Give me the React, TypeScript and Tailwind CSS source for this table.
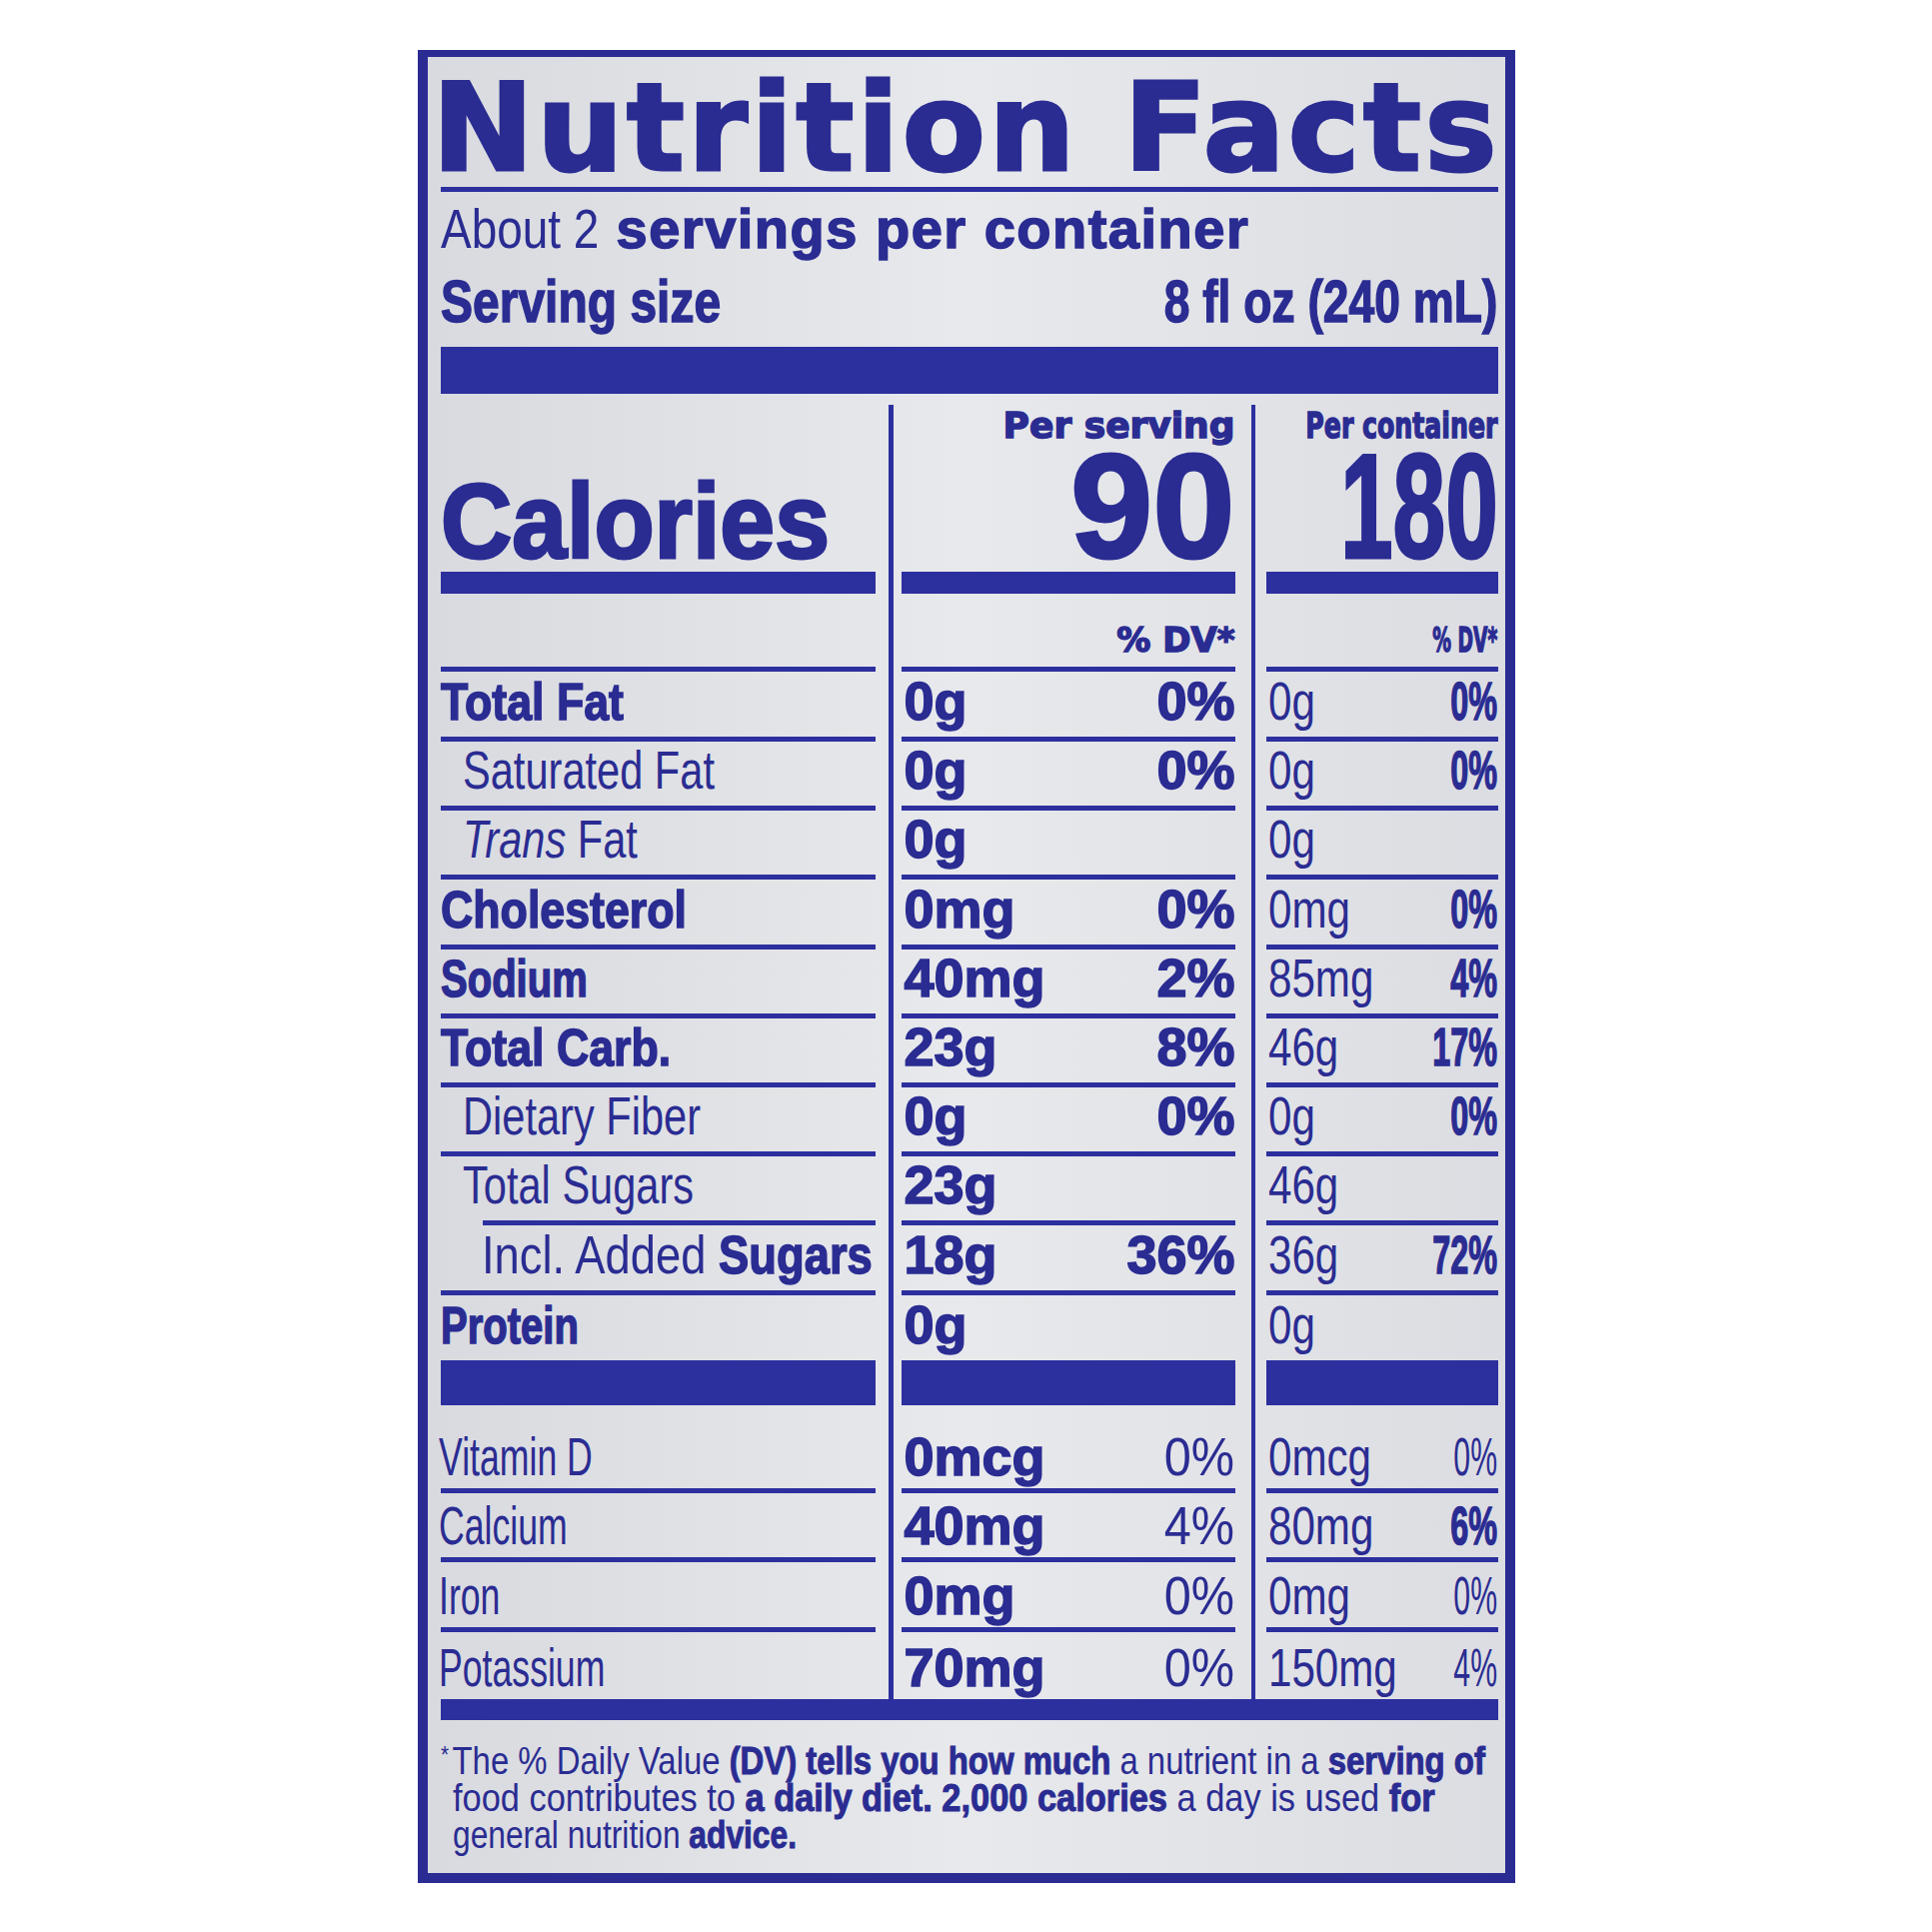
import type { ReactNode } from 'react';

type Row = {
  label: ReactNode;
  h: string;
  v1: string;
  p1?: string;
  v2: string;
  p2?: string;
  p2Bold?: boolean;
  shortLine?: boolean;
};

function Bold({ children, narrow }: { children: ReactNode; narrow?: boolean }) {
  return (
    <span
      className={
        narrow
          ? 'origin-left scale-x-[0.77] whitespace-nowrap font-bold text-[52px] leading-none [-webkit-text-stroke:1.5px_#2a2c92]'
          : 'origin-left scale-x-[0.86] whitespace-nowrap font-bold text-[52px] leading-none [-webkit-text-stroke:1.5px_#2a2c92]'
      }
    >
      {children}
    </span>
  );
}

function Sub({ children, deep }: { children: ReactNode; deep?: boolean }) {
  return deep ? (
    <span className="ml-[41px] origin-left scale-x-[0.84] whitespace-nowrap text-[54px] leading-none">{children}</span>
  ) : (
    <span className="ml-[22px] origin-left scale-x-[0.77] whitespace-nowrap text-[54px] leading-none">{children}</span>
  );
}

const nutrients: Row[] = [
  { label: <Bold>Total Fat</Bold>, h: 'h-[65px]', v1: '0g', p1: '0%', v2: '0g', p2: '0%' },
  { label: <Sub>Saturated Fat</Sub>, h: 'h-[64px]', v1: '0g', p1: '0%', v2: '0g', p2: '0%' },
  { label: <Sub><span className="italic">Trans</span> Fat</Sub>, h: 'h-[64px]', v1: '0g', v2: '0g' },
  { label: <Bold>Cholesterol</Bold>, h: 'h-[65px]', v1: '0mg', p1: '0%', v2: '0mg', p2: '0%' },
  { label: <Bold narrow>Sodium</Bold>, h: 'h-[64px]', v1: '40mg', p1: '2%', v2: '85mg', p2: '4%' },
  { label: <Bold>Total Carb.</Bold>, h: 'h-[64px]', v1: '23g', p1: '8%', v2: '46g', p2: '17%' },
  { label: <Sub>Dietary Fiber</Sub>, h: 'h-[64px]', v1: '0g', p1: '0%', v2: '0g', p2: '0%' },
  { label: <Sub>Total Sugars</Sub>, h: 'h-[64px]', v1: '23g', v2: '46g', shortLine: true },
  {
    label: <Sub deep>Incl. Added <span className="font-bold [-webkit-text-stroke:1.5px_#2a2c92]">Sugars</span></Sub>,
    h: 'h-[65px]',
    v1: '18g',
    p1: '36%',
    v2: '36g',
    p2: '72%',
  },
];

const vitamins: Row[] = [
  { label: 'Vitamin D', h: 'h-[83px]', v1: '0mcg', p1: '0%', v2: '0mcg', p2: '0%' },
  { label: 'Calcium', h: 'h-[64px]', v1: '40mg', p1: '4%', v2: '80mg', p2: '6%', p2Bold: true },
  { label: 'Iron', h: 'h-[65px]', v1: '0mg', p1: '0%', v2: '0mg', p2: '0%' },
  { label: 'Potassium', h: 'h-[67px]', v1: '70mg', p1: '0%', v2: '150mg', p2: '4%' },
];

function Rule({ className = '' }: { className?: string }) {
  return <div className={`h-[5px] bg-[#2c2f9e] ${className}`} />;
}

function LabelColumn() {
  return (
    <div className="w-[435px] flex flex-col">
      <div className="h-[178px] pt-[74px]">
        <div className="origin-left scale-x-[0.93] whitespace-nowrap font-bold text-[106px] leading-none [-webkit-text-stroke:3px_#2a2c92]">
          Calories
        </div>
      </div>
      <div className="h-[22px] bg-[#2c2f9e]" />
      <div className="h-[73px]" />
      <Rule />
      {nutrients.map((r, i) => (
        <div key={i}>
          <div className={`${r.h} flex items-end pb-[9px]`}>{r.label}</div>
          <Rule className={r.shortLine ? 'ml-[42px]' : ''} />
        </div>
      ))}
      <div className="h-[65px] flex items-end pb-[9px]">
        <Bold narrow>Protein</Bold>
      </div>
      <div className="h-[45px] bg-[#2c2f9e]" />
      {vitamins.map((r, i) => (
        <div key={i}>
          <div className={`${r.h} flex items-end pb-[5px]`}>
            <span className="-ml-[2px] origin-left scale-x-[0.66] whitespace-nowrap text-[54px] leading-none">{r.label}</span>
          </div>
          {i < vitamins.length - 1 && <Rule />}
        </div>
      ))}
    </div>
  );
}

function ServingColumn() {
  return (
    <div className="w-[334px] flex flex-col">
      <div className="h-[178px] pt-[14px] flex flex-col items-end">
        <div className="shrink-0 font-['DejaVu_Sans',sans-serif] font-bold text-[36px] leading-none whitespace-nowrap [-webkit-text-stroke:1.5px_#2a2c92]">
          Per serving
        </div>
        <div className="mt-[8px] font-bold text-[148px] leading-[110px] [-webkit-text-stroke:3px_#2a2c92]">90</div>
      </div>
      <div className="h-[22px] bg-[#2c2f9e]" />
      <div className="h-[73px] pt-[29px] flex justify-end">
        <div className="font-['DejaVu_Sans',sans-serif] font-bold text-[34px] leading-none whitespace-nowrap [-webkit-text-stroke:1.5px_#2a2c92]">
          % DV*
        </div>
      </div>
      <Rule />
      {nutrients.map((r, i) => (
        <div key={i}>
          <div className={`${r.h} flex items-end justify-between pb-[9px] pl-[3px] font-bold text-[54px] leading-none [-webkit-text-stroke:1.5px_#2a2c92]`}>
            <span>{r.v1}</span>
            {r.p1 && <span>{r.p1}</span>}
          </div>
          <Rule />
        </div>
      ))}
      <div className="h-[65px] flex items-end pb-[9px] pl-[3px] font-bold text-[54px] leading-none [-webkit-text-stroke:1.5px_#2a2c92]">
        <span>0g</span>
      </div>
      <div className="h-[45px] bg-[#2c2f9e]" />
      {vitamins.map((r, i) => (
        <div key={i}>
          <div className={`${r.h} flex items-end justify-between pb-[5px] pl-[3px] text-[54px] leading-none`}>
            <span className="font-bold [-webkit-text-stroke:1.5px_#2a2c92]">{r.v1}</span>
            <span className="origin-right scale-x-[0.9]">{r.p1}</span>
          </div>
          {i < vitamins.length - 1 && <Rule />}
        </div>
      ))}
    </div>
  );
}

function ContainerColumn() {
  return (
    <div className="w-[232px] flex flex-col">
      <div className="h-[178px] pt-[14px] flex flex-col items-end">
        <div className="shrink-0 origin-right scale-x-[0.7] font-['DejaVu_Sans',sans-serif] font-bold text-[36px] leading-none whitespace-nowrap [-webkit-text-stroke:1.5px_#2a2c92]">
          Per container
        </div>
        <div className="shrink-0 mt-[8px] origin-right scale-x-[0.64] whitespace-nowrap font-bold text-[148px] leading-[110px] [-webkit-text-stroke:3px_#2a2c92]">
          180
        </div>
      </div>
      <div className="h-[22px] bg-[#2c2f9e]" />
      <div className="h-[73px] pt-[29px] flex justify-end">
        <div className="shrink-0 origin-right scale-x-[0.55] font-['DejaVu_Sans',sans-serif] font-bold text-[34px] leading-none whitespace-nowrap [-webkit-text-stroke:1.5px_#2a2c92]">
          % DV*
        </div>
      </div>
      <Rule />
      {nutrients.map((r, i) => (
        <div key={i}>
          <div className={`${r.h} flex items-end justify-between pb-[9px] pl-[2px] text-[54px] leading-none`}>
            <span className="min-w-0 whitespace-nowrap origin-left scale-x-[0.78]">{r.v2}</span>
            {r.p2 && (
              <span className="shrink-0 origin-right scale-x-[0.6] font-bold [-webkit-text-stroke:1.5px_#2a2c92]">{r.p2}</span>
            )}
          </div>
          <Rule />
        </div>
      ))}
      <div className="h-[65px] flex items-end pb-[9px] pl-[2px] text-[54px] leading-none">
        <span className="origin-left scale-x-[0.78]">0g</span>
      </div>
      <div className="h-[45px] bg-[#2c2f9e]" />
      {vitamins.map((r, i) => (
        <div key={i}>
          <div className={`${r.h} flex items-end justify-between pb-[5px] pl-[2px] text-[54px] leading-none`}>
            <span className="min-w-0 whitespace-nowrap origin-left scale-x-[0.78]">{r.v2}</span>
            <span
              className={
                r.p2Bold
                  ? 'shrink-0 origin-right scale-x-[0.6] font-bold [-webkit-text-stroke:1.5px_#2a2c92]'
                  : 'shrink-0 origin-right scale-x-[0.56]'
              }
            >
              {r.p2}
            </span>
          </div>
          {i < vitamins.length - 1 && <Rule />}
        </div>
      ))}
    </div>
  );
}

export default function App() {
  return (
    <div className="w-[1933px] h-[1933px] bg-white flex items-center justify-center font-['Liberation_Sans',Arial,sans-serif] text-[#2a2c92]">
      <div className="w-[1098px] h-[1834px] flex flex-col border-[#2a2c94] border-l-[10px] border-r-[10px] border-t-[7px] border-b-[10px] bg-linear-to-r from-[#d9dadf] via-[#e8e9ec] to-[#dcdde2] pl-[13px] pr-[7px]">
        {/* title block */}
        <div className="h-[130px] pt-[11px] -ml-[8px] font-['DejaVu_Sans',sans-serif] font-bold text-[121px] leading-none tracking-[3.5px] whitespace-nowrap [-webkit-text-stroke:3px_#2a2c92]">
          Nutrition Facts
        </div>
        <Rule />
        <div className="mt-[9px] flex items-end text-[56px] leading-none whitespace-nowrap">
          <span className="shrink-0 origin-left scale-x-[0.82]">About 2</span>
          <span className="shrink-0 ml-[-17px] tracking-[1.5px] font-bold [-webkit-text-stroke:1.5px_#2a2c92]">
            servings per container
          </span>
        </div>
        <div className="mt-[15px] flex justify-between font-bold text-[60px] leading-none [-webkit-text-stroke:1.5px_#2a2c92]">
          <span className="origin-left scale-x-[0.8] whitespace-nowrap">Serving size</span>
          <span className="origin-right scale-x-[0.77] whitespace-nowrap">8 fl oz (240 mL)</span>
        </div>
        <div className="mt-[15px] h-[47px] bg-[#2c2f9e]" />

        {/* three columns */}
        <div className="flex h-[1306px]">
          <LabelColumn />
          <div className="w-[26px] flex">
            <div className="ml-[13px] mt-[11px] w-[5px] bg-[#2c2f9e]" />
          </div>
          <ServingColumn />
          <div className="w-[31px] flex">
            <div className="ml-[16px] mt-[11px] w-[4px] bg-[#2c2f9e]" />
          </div>
          <ContainerColumn />
        </div>
        <div className="h-[21px] bg-[#2c2f9e]" />

        {/* footnote */}
        <div className="mt-[23px] text-[38px] leading-[37px]">
          <div className="origin-left scale-x-[0.865] whitespace-nowrap">
            <span className="mr-[4px] align-top text-[24px] leading-none">*</span>
            The % Daily Value <span className="font-bold [-webkit-text-stroke:1px_#2a2c92]">(DV) tells you how much</span> a nutrient in a{' '}
            <span className="font-bold [-webkit-text-stroke:1px_#2a2c92]">serving of</span>
          </div>
          <div className="pl-[12px]">
            <div className="origin-left scale-x-[0.905] whitespace-nowrap">
              food contributes to <span className="font-bold [-webkit-text-stroke:1px_#2a2c92]">a daily diet. 2,000 calories</span> a day is used{' '}
              <span className="font-bold [-webkit-text-stroke:1px_#2a2c92]">for</span>
            </div>
          </div>
          <div className="pl-[12px]">
            <div className="origin-left scale-x-[0.835] whitespace-nowrap">
              general nutrition <span className="font-bold [-webkit-text-stroke:1px_#2a2c92]">advice.</span>
            </div>
          </div>
        </div>
      </div>
    </div>
  );
}
